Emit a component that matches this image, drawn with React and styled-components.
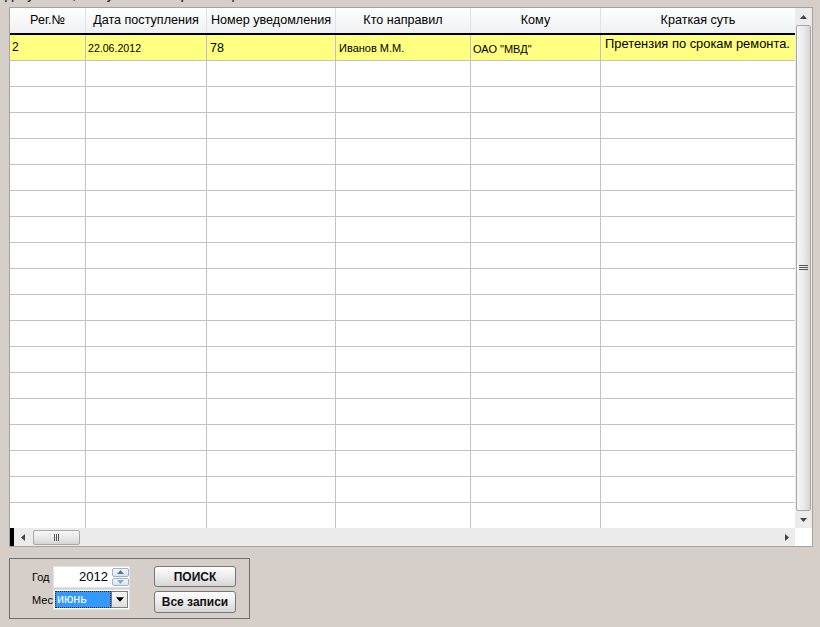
import React from "react";
import styled, { createGlobalStyle } from "styled-components";

const GlobalStyle = createGlobalStyle`
  html, body { margin: 0; padding: 0; background: #d6cfc9; }
  body { font-family: "Liberation Sans", Arial, sans-serif; color: #000; }
  * { box-sizing: border-box; }
`;

const COLS = "76px 121px 129px 135px 130px 194px";

const Page = styled.div`
  width: 820px;
  height: 627px;
  overflow: hidden;
  background: #d6cfc9;
`;

const TitleStrip = styled.div`
  height: 7px;
  overflow: hidden;
  padding-left: 5px;
`;

const TitleText = styled.div`
  margin-top: -11px;
  font-size: 12px;
  line-height: 12px;
  font-weight: bold;
  color: #303030;
  white-space: nowrap;
`;

const Frame = styled.div`
  margin-left: 9px;
  width: 804px;
  height: 540px;
  border: 1px solid #a3a3a3;
  background: #fff;
  display: grid;
  grid-template-columns: 785px 17px;
  grid-template-rows: 520px 18px;
`;

const GridArea = styled.div`
  overflow: hidden;
  display: flex;
  flex-direction: column;
`;

const HeaderRow = styled.div`
  display: grid;
  grid-template-columns: ${COLS};
  height: 27px;
  flex: none;
  border-bottom: 2px solid #000;
  background: linear-gradient(#ffffff, #eef0f2);
`;

const HeaderCell = styled.div`
  border-right: ${(p) => (p.$last ? "none" : "1px solid #dfe1e4")};
  text-align: center;
  font-size: 12.6px;
  line-height: 25px;
  white-space: nowrap;
  overflow: hidden;
`;

const Row = styled.div`
  display: grid;
  grid-template-columns: ${COLS};
  height: 26px;
  flex: none;
  border-bottom: 1px solid #c3c3c3;
  background: ${(p) => (p.$selected ? "#ffff80" : "#fff")};
`;

const Cell = styled.div`
  border-right: ${(p) =>
    p.$last ? "none" : p.$selected ? "1px solid #bdbde0" : "1px solid #c3c3c3"};
  padding: ${(p) => p.$pt || 0}px 0 0 ${(p) => p.$pl || 3}px;
  font-size: ${(p) => p.$size || 12}px;
  line-height: 14px;
  white-space: nowrap;
  overflow: hidden;
`;

const VScroll = styled.div`
  display: flex;
  flex-direction: column;
  background: #ececec;
`;

const ArrowBox = styled.div`
  flex: none;
  width: ${(p) => p.$w || 17}px;
  height: ${(p) => p.$h || 17}px;
  display: flex;
  align-items: center;
  justify-content: center;
`;

const VThumb = styled.div`
  flex: 1;
  margin: 0 1px;
  border: 1px solid #a8a8a8;
  border-radius: 2px;
  background: linear-gradient(90deg, #f7f7f7, #e8e8e8 60%, #d4d4d4);
  display: flex;
  align-items: center;
  justify-content: center;
`;

const HScroll = styled.div`
  display: flex;
  align-items: center;
  background: #ececec;
`;

const BlackStrip = styled.div`
  width: 4px;
  align-self: stretch;
  background: #000;
`;

const HThumb = styled.div`
  width: 47px;
  height: 15px;
  margin-left: 2px;
  border: 1px solid #a8a8a8;
  border-radius: 2px;
  background: linear-gradient(#f7f7f7, #e6e6e6 60%, #d4d4d4);
  display: flex;
  align-items: center;
  justify-content: center;
`;

const Spacer = styled.div`
  flex: 1;
`;

const Corner = styled.div`
  background: #fff;
`;

const GroupBox = styled.div`
  margin: 11px 0 0 9px;
  width: 241px;
  height: 61px;
  border: 1px solid #6e6e6e;
  display: flex;
  align-items: flex-start;
  padding: 7px 0 0 22px;
`;

const FieldGrid = styled.div`
  display: grid;
  grid-template-columns: 20px 77px;
  grid-template-rows: 22px 21px;
  column-gap: 1px;
  row-gap: 1px;
`;

const Label = styled.div`
  font-size: 11px;
  align-self: center;
  white-space: nowrap;
`;

const YearBox = styled.div`
  display: flex;
  background: #fff;
  border: 1px solid #e2e2e2;
`;

const YearValue = styled.div`
  flex: 1;
  text-align: right;
  font-size: 13px;
  line-height: 20px;
  padding-right: 4px;
`;

const Spinner = styled.div`
  width: 17px;
  display: flex;
  flex-direction: column;
  gap: 1px;
  padding: 1px 0;
`;

const SpinButton = styled.div`
  flex: 1;
  border: 1px solid #9fb2cc;
  border-radius: 2px;
  background: linear-gradient(#f4f8fd, #d8e4f2);
  display: flex;
  align-items: center;
  justify-content: center;
`;

const MonthBox = styled.div`
  display: flex;
  background: #fff;
  border: 1px solid #e2e2e2;
  padding: 1px;
`;

const MonthValue = styled.div`
  flex: 1;
  background: #3399ff;
  outline: 1px dotted #222;
  outline-offset: -1px;
  color: #fff;
  font-size: 12.5px;
  line-height: 17px;
  padding-left: 2px;
`;

const DropButton = styled.div`
  width: 17px;
  border: 1px solid #7d7d7d;
  background: linear-gradient(#fafafa, #dedede);
  display: flex;
  align-items: center;
  justify-content: center;
`;

const ButtonColumn = styled.div`
  margin-left: 24px;
  display: flex;
  flex-direction: column;
  gap: 4px;
`;

const Button = styled.button`
  width: 82px;
  height: ${(p) => p.$h}px;
  padding: 0;
  border: 1px solid #767676;
  border-radius: 3px;
  background: linear-gradient(#fdfdfd, #ececec 50%, #d6d6d6);
  font-family: "Liberation Sans", Arial, sans-serif;
  font-weight: bold;
  font-size: 12px;
  color: #111;
`;

const Tri = ({ dir, color = "#333", size = 7 }) => {
  const pts = {
    up: "0,5 3.5,1 7,5",
    down: "0,1 3.5,5 7,1",
    left: "5,0 1,3.5 5,7",
    right: "1,0 5,3.5 1,7",
  }[dir];
  const vb = dir === "up" || dir === "down" ? "0 0 7 6" : "0 0 6 7";
  const w = dir === "up" || dir === "down" ? size : size - 1;
  const h = dir === "up" || dir === "down" ? size - 1 : size;
  return (
    <svg width={w} height={h} viewBox={vb}>
      <polygon points={pts} fill={color} />
    </svg>
  );
};

const GripV = () => (
  <svg width="9" height="6" viewBox="0 0 9 6">
    <rect x="0" y="0" width="9" height="1" fill="#555" />
    <rect x="0" y="2" width="9" height="1" fill="#555" />
    <rect x="0" y="4" width="9" height="1" fill="#555" />
  </svg>
);

const GripH = () => (
  <svg width="6" height="7" viewBox="0 0 6 7">
    <rect x="0" y="0" width="1" height="7" fill="#555" />
    <rect x="2" y="0" width="1" height="7" fill="#555" />
    <rect x="4" y="0" width="1" height="7" fill="#555" />
  </svg>
);

const headers = [
  "Рег.№",
  "Дата поступления",
  "Номер уведомления",
  "Кто направил",
  "Кому",
  "Краткая суть",
];

const firstRow = [
  { text: "2", pt: 5, pl: 2, size: 12 },
  { text: "22.06.2012", pt: 6, pl: 2, size: 10.6 },
  { text: "78", pt: 6, pl: 3, size: 12.5 },
  { text: "Иванов М.М.", pt: 6, pl: 3, size: 11 },
  { text: 'ОАО "МВД"', pt: 7, pl: 2, size: 11 },
  { text: "Претензия по срокам ремонта.", pt: 2, pl: 4, size: 12.9 },
];

export default function App() {
  const emptyRows = Array.from({ length: 18 });
  return (
    <Page>
      <GlobalStyle />
      <TitleStrip>
        <TitleText>Документы, поступившие в организацию</TitleText>
      </TitleStrip>
      <Frame>
        <GridArea>
          <HeaderRow>
            {headers.map((h, i) => (
              <HeaderCell key={h} $last={i === headers.length - 1}>
                {h}
              </HeaderCell>
            ))}
          </HeaderRow>
          <Row $selected>
            {firstRow.map((c, i) => (
              <Cell
                key={i}
                $selected
                $last={i === firstRow.length - 1}
                $pt={c.pt}
                $pl={c.pl}
                $size={c.size}
              >
                {c.text}
              </Cell>
            ))}
          </Row>
          {emptyRows.map((_, r) => (
            <Row key={r}>
              {headers.map((h, i) => (
                <Cell key={h} $last={i === headers.length - 1} />
              ))}
            </Row>
          ))}
        </GridArea>
        <VScroll>
          <ArrowBox>
            <Tri dir="up" color="#444" size={7} />
          </ArrowBox>
          <VThumb>
            <GripV />
          </VThumb>
          <ArrowBox>
            <Tri dir="down" color="#444" size={7} />
          </ArrowBox>
        </VScroll>
        <HScroll>
          <BlackStrip />
          <ArrowBox $w={17} $h={18}>
            <Tri dir="left" color="#444" size={7} />
          </ArrowBox>
          <HThumb>
            <GripH />
          </HThumb>
          <Spacer />
          <ArrowBox $w={17} $h={18}>
            <Tri dir="right" color="#444" size={7} />
          </ArrowBox>
        </HScroll>
        <Corner />
      </Frame>
      <GroupBox>
        <FieldGrid>
          <Label>Год</Label>
          <YearBox>
            <YearValue>2012</YearValue>
            <Spinner>
              <SpinButton>
                <Tri dir="up" color="#4f74a8" size={7} />
              </SpinButton>
              <SpinButton>
                <Tri dir="down" color="#8fa6c8" size={7} />
              </SpinButton>
            </Spinner>
          </YearBox>
          <Label>Мес</Label>
          <MonthBox>
            <MonthValue>июнь</MonthValue>
            <DropButton>
              <Tri dir="down" color="#000" size={8} />
            </DropButton>
          </MonthBox>
        </FieldGrid>
        <ButtonColumn>
          <Button $h={21}>ПОИСК</Button>
          <Button $h={22}>Все записи</Button>
        </ButtonColumn>
      </GroupBox>
    </Page>
  );
}
